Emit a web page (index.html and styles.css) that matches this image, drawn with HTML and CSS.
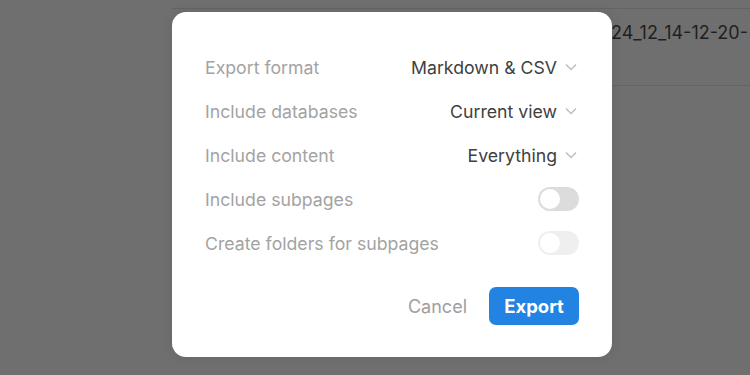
FILE: index.html
```html
<!DOCTYPE html>
<html>
<head>
<meta charset="utf-8">
<link rel="stylesheet" href="styles.css">
</head>
<body>
<div class="page">
  <div class="page-side"></div>
  <div class="page-main">
    <div class="file-row"><span class="file-name">24_12_14-12-20-</span></div>
  </div>
</div>
<div class="overlay">
  <div class="modal">
    <div class="rows">
      <div class="row"><span class="label">Export format</span><span class="value">Markdown &amp; CSV<svg class="chev" viewBox="0 0 12 8"><path d="M1 1.5l5 5 5-5" /></svg></span></div>
      <div class="row"><span class="label">Include databases</span><span class="value">Current view<svg class="chev" viewBox="0 0 12 8"><path d="M1 1.5l5 5 5-5" /></svg></span></div>
      <div class="row"><span class="label">Include content</span><span class="value">Everything<svg class="chev" viewBox="0 0 12 8"><path d="M1 1.5l5 5 5-5" /></svg></span></div>
      <div class="row"><span class="label">Include subpages</span><span class="toggle"><span class="knob"></span></span></div>
      <div class="row"><span class="label">Create folders for subpages</span><span class="toggle disabled"><span class="knob"></span></span></div>
    </div>
    <div class="actions">
      <span class="cancel">Cancel</span>
      <span class="export">Export</span>
    </div>
  </div>
</div>
</body>
</html>
```

FILE: styles.css
```css
* { box-sizing: border-box; }
html, body { margin: 0; padding: 0; }
body {
  width: 750px;
  height: 375px;
  overflow: hidden;
  background: #6f6f6f;
  font-family: Inter, "Noto Sans", sans-serif;
  position: relative;
}
.page { display: flex; height: 100%; }
.page-side { width: 172px; flex: none; }
.page-main { flex: 1; padding-top: 8px; }
.file-row {
  border-top: 1px solid #646464;
  border-bottom: 1px solid #646464;
  height: 78px;
  display: flex;
  padding-top: 13px;
  padding-left: 439px;
  overflow: hidden;
  white-space: nowrap;
}
.file-name {
  font-size: 18px;
  color: #1f1f1f;
}
.overlay {
  position: absolute;
  left: 172px;
  top: 12px;
}
.modal {
  width: 440px;
  height: 345px;
  background: #fff;
  border-radius: 14px;
  padding: 33px 33px 32px 33px;
  display: flex;
  flex-direction: column;
  box-shadow: 0 0 12px rgba(0,0,0,0.08);
}
.rows { display: flex; flex-direction: column; }
.row {
  height: 44px;
  display: flex;
  align-items: center;
  justify-content: space-between;
}
.label {
  font-size: 17.7px;
  color: #a3a3a3;
}
.value {
  font-size: 17.7px;
  color: #404040;
  display: flex;
  align-items: center;
}
.chev {
  width: 12px;
  height: 8px;
  margin-left: 8px;
  margin-right: 2px;
  fill: none;
  stroke: #bdbdbd;
  stroke-width: 1.4;
}
.toggle {
  width: 41px;
  height: 24px;
  border-radius: 12px;
  background: #dcdcdc;
  padding: 2px;
  display: flex;
}
.toggle.disabled { background: #efefef; }
.knob {
  width: 20px;
  height: 20px;
  border-radius: 50%;
  background: #fff;
}
.actions {
  margin-top: 22px;
  display: flex;
  justify-content: flex-end;
  align-items: center;
  gap: 22px;
}
.cancel {
  font-size: 18px;
  color: #9e9e9e;
}
.export {
  width: 90px;
  height: 38px;
  border-radius: 7px;
  background: #2383e2;
  color: #fff;
  font-size: 18.5px;
  font-weight: 700;
  display: flex;
  align-items: center;
  justify-content: center;
}
```
